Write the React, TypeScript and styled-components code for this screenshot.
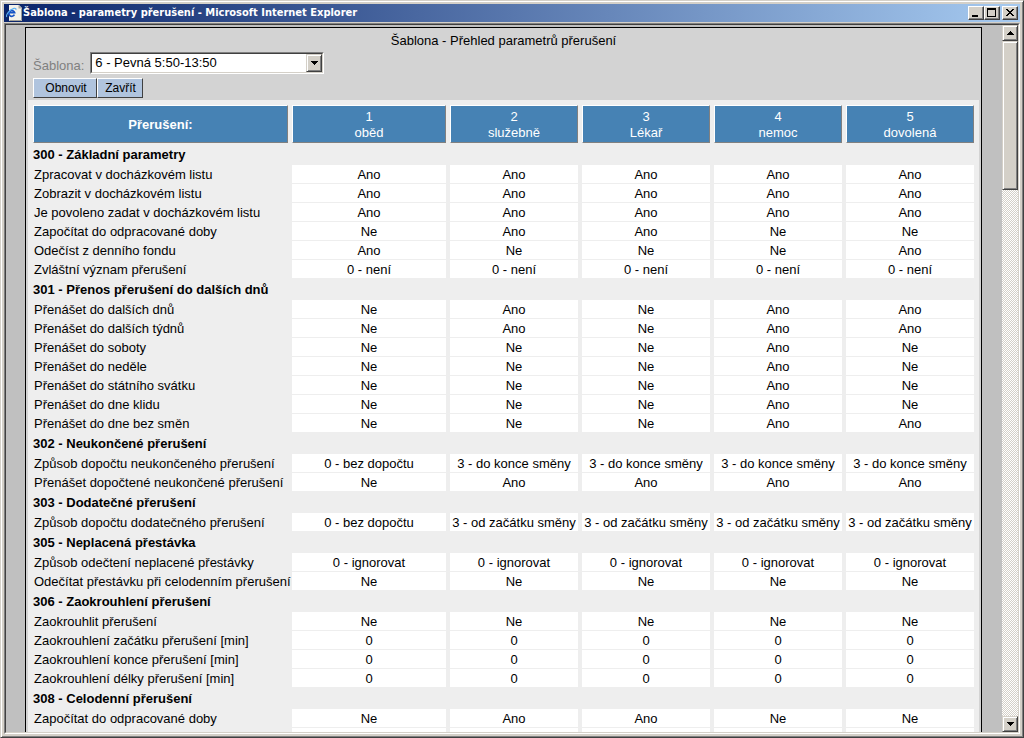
import React from "react";
import styled, { createGlobalStyle, css } from "styled-components";

const GlobalStyle = createGlobalStyle`
  *, *::before, *::after { box-sizing: border-box; }
  body { margin: 0; background: #d4d0c8; }
  button, select { font: inherit; color: inherit; margin: 0; border-radius: 0; }
`;

const face = "#d4d0c8";

/* Classic two-pixel raised edge of the system controls */
const raised = css`
  background: ${face};
  border: 1px solid;
  border-color: ${face} #404040 #404040 ${face};
  box-shadow: inset 1px 1px 0 #ffffff, inset -1px -1px 0 #808080;
`;

const WindowFrame = styled.div`
  display: flex;
  flex-direction: column;
  height: 100vh;
  min-width: 760px;
  padding: 3px;
  font: 13px/18px "Liberation Sans", Arial, sans-serif;
  color: #000000;
  ${raised}
`;

const TitleBar = styled.header`
  display: flex;
  align-items: center;
  flex: none;
  height: 18px;
  margin-bottom: 1px;
  padding: 0 2px;
  background: linear-gradient(to right, #0a246a, #a6caf0);
`;

const TitleText = styled.h1`
  flex: 1;
  margin: 0 0 0 1px;
  font: bold 11px/16px "DejaVu Sans Condensed", "DejaVu Sans", Tahoma, sans-serif;
  color: #ffffff;
  white-space: nowrap;
`;

const CaptionButton = styled.button<{ $apart?: boolean }>`
  display: flex;
  width: 16px;
  height: 14px;
  margin-left: ${(p) => (p.$apart ? 2 : 0)}px;
  padding: 0;
  ${raised}
  border-color: #ffffff #404040 #404040 #ffffff;
  box-shadow: inset -1px -1px 0 #808080;
`;

const Client = styled.div`
  display: flex;
  flex: 1;
  min-height: 0;
  border: 1px solid;
  border-color: #808080 #ffffff #ffffff #808080;
`;

const ClientInner = styled.div`
  display: flex;
  flex: 1;
  min-width: 0;
  border: 1px solid;
  border-color: #404040 ${face} ${face} #404040;
  background: #c0c0c0;
`;

const Viewport = styled.main`
  flex: 1;
  min-width: 0;
  overflow: hidden;
  padding: 2px 20px 0 19px;
`;

const Panel = styled.div`
  border: 1px solid #000000;
  background: #d3d3d3;
  padding: 4px 2px 2px;
`;

const PageTitle = styled.h2`
  margin: 0;
  font-size: 13px;
  font-weight: normal;
  line-height: 18px;
  text-align: center;
`;

const Field = styled.div`
  display: flex;
  align-items: flex-end;
  gap: 6px;
  padding: 2px 5px 4px;
`;

const FieldLabel = styled.label`
  font-size: 13px;
  line-height: 16px;
  color: #808080;
`;

const SelectBox = styled.div`
  position: relative;
  width: 234px;
  border: 1px solid;
  border-color: #808080 #ffffff #ffffff #808080;
`;

const Select = styled.select`
  display: block;
  appearance: none;
  width: 100%;
  height: 20px;
  padding: 0 20px 0 3px;
  border: 1px solid;
  border-color: #404040 ${face} ${face} #404040;
  background: #ffffff;
  font-size: 13px;
  line-height: 18px;
`;

const SelectArrow = styled.span`
  position: absolute;
  top: 1px;
  right: 1px;
  bottom: 1px;
  display: flex;
  align-items: center;
  justify-content: center;
  width: 16px;
  pointer-events: none;
  ${raised}
`;

const Actions = styled.div`
  display: flex;
  padding: 0 5px 2px;
`;

const ActionButton = styled.button<{ $wide?: boolean }>`
  height: 20px;
  width: ${(p) => (p.$wide ? 64 : 46)}px;
  padding: 0 0 0 ${(p) => (p.$wide ? 2 : 1)}px;
  border: 1px solid;
  border-color: #ffffff #404040 #404040 #ffffff;
  background: #b0c4de;
  font-size: 12px;
  line-height: 18px;
`;

const Grid = styled.table`
  table-layout: fixed;
  width: 100%;
  padding: 4px 1px 1px;
  border-collapse: separate;
  border-spacing: 4px 1px;
  background: #eeeeee;
  line-height: 16px;
  white-space: nowrap;
`;

const NameCol = styled.col`
  width: 255px;
`;

const FirstCol = styled.col`
  width: 154px;
`;

const HeadCell = styled.th`
  height: 38px;
  padding: 2px 0 0;
  border: 1px solid;
  border-color: #ffffff #808080 #808080 #ffffff;
  background: #4682b4;
  color: #ffffff;
  font-weight: normal;
  &:first-child { font-weight: bold; }
`;

const SectionCell = styled.th`
  height: 20px;
  padding: 2px 0 0;
  text-align: left;
`;

const NameCell = styled.th`
  height: 18px;
  padding: 2px 0 0 1px;
  font-weight: normal;
  text-align: left;
`;

const ValueCell = styled.td`
  height: 18px;
  padding: 2px 0 0;
  background: #ffffff;
  text-align: center;
`;

const ScrollBar = styled.div`
  display: flex;
  flex: none;
  flex-direction: column;
  width: 16px;
  background: repeating-conic-gradient(#ffffff 0 25%, ${face} 0 50%) 0 0 / 2px 2px;
`;

const ScrollButton = styled.button`
  display: flex;
  align-items: center;
  justify-content: center;
  flex: none;
  width: 16px;
  height: 16px;
  padding: 0;
  ${raised}
`;

const ScrollTrack = styled.div`
  flex: 1;
`;

const ScrollThumb = styled.div`
  height: 22%;
  ${raised}
`;

const Arrow = ({ up = false }: { up?: boolean }) => (
  <svg width="7" height="4" viewBox="0 0 7 4" shapeRendering="crispEdges" aria-hidden="true">
    <path d={up ? "M3 0h1v1h1v1h1v1h1v1H0V3h1V2h1V1h1z" : "M0 0h7v1H6v1H5v1H4v1H3V3H2V2H1V1H0z"} />
  </svg>
);

const PageIcon = () => (
  <svg width="16" height="16" viewBox="0 0 16 16" aria-hidden="true">
    <path d="M3 0h10l3 3v13H3z" fill="#f4f2ea" />
    <path d="M12.500 0v3.500H16z" fill="#a8a79f" />
    <path d="M15.500 3.500v12H3.500" fill="none" stroke="#a09f97" />
    <path d="M8.400 9.700A2.900 2.900 0 1 1 8.600 7.600H3.400" fill="none" stroke="#1552c4" strokeWidth="1.700" />
    <path d="M.9 12C-.6 10 3.600 4.500 8 3.400c1.800-.4 2.400.4 1.700 1.600" fill="none" stroke="#5ab0f4" strokeWidth="1.100" />
  </svg>
);

type Row = [string, string[]];
type Section = { title: string; rows: Row[] };

const same = (v: string) => [v, v, v, v, v];
const flags = (s: string) => s.split("").map((c) => (c === "A" ? "Ano" : "Ne"));

const columns = ["oběd", "služebně", "Lékař", "nemoc", "dovolená"];

const sections: Section[] = [
  {
    title: "300 - Základní parametry",
    rows: [
      ["Zpracovat v docházkovém listu", flags("AAAAA")],
      ["Zobrazit v docházkovém listu", flags("AAAAA")],
      ["Je povoleno zadat v docházkovém listu", flags("AAAAA")],
      ["Započítat do odpracované doby", flags("NAANN")],
      ["Odečíst z denního fondu", flags("ANNNA")],
      ["Zvláštní význam přerušení", same("0 - není")],
    ],
  },
  {
    title: "301 - Přenos přerušení do dalších dnů",
    rows: [
      ["Přenášet do dalších dnů", flags("NANAA")],
      ["Přenášet do dalších týdnů", flags("NANAA")],
      ["Přenášet do soboty", flags("NNNAN")],
      ["Přenášet do neděle", flags("NNNAN")],
      ["Přenášet do státního svátku", flags("NNNAN")],
      ["Přenášet do dne klidu", flags("NNNAN")],
      ["Přenášet do dne bez směn", flags("NNNAA")],
    ],
  },
  {
    title: "302 - Neukončené přerušení",
    rows: [
      ["Způsob dopočtu neukončeného přerušení", ["0 - bez dopočtu", ...same("3 - do konce směny").slice(1)]],
      ["Přenášet dopočtené neukončené přerušení", flags("NAAAA")],
    ],
  },
  {
    title: "303 - Dodatečné přerušení",
    rows: [
      ["Způsob dopočtu dodatečného přerušení", ["0 - bez dopočtu", ...same("3 - od začátku směny").slice(1)]],
    ],
  },
  {
    title: "305 - Neplacená přestávka",
    rows: [
      ["Způsob odečtení neplacené přestávky", same("0 - ignorovat")],
      ["Odečítat přestávku při celodenním přerušení", flags("NNNNN")],
    ],
  },
  {
    title: "306 - Zaokrouhlení přerušení",
    rows: [
      ["Zaokrouhlit přerušení", flags("NNNNN")],
      ["Zaokrouhlení začátku přerušení [min]", same("0")],
      ["Zaokrouhlení konce přerušení [min]", same("0")],
      ["Zaokrouhlení délky přerušení [min]", same("0")],
    ],
  },
  {
    title: "308 - Celodenní přerušení",
    rows: [
      ["Započítat do odpracované doby", flags("NAANN")],
      ["", same("")],
    ],
  },
];

export default function App() {
  return (
    <>
      <GlobalStyle />
      <WindowFrame>
        <TitleBar>
          <PageIcon />
          <TitleText>Šablona - parametry přerušení - Microsoft Internet Explorer</TitleText>
          <CaptionButton type="button" aria-label="Minimalizovat">
            <svg width="14" height="12" viewBox="0 0 14 12" shapeRendering="crispEdges">
              <path d="M3 8h6v2H3z" />
            </svg>
          </CaptionButton>
          <CaptionButton type="button" aria-label="Maximalizovat">
            <svg width="14" height="12" viewBox="0 0 14 12" shapeRendering="crispEdges">
              <path d="M2 1h9v9H2zM3 3v6h7V3z" fillRule="evenodd" />
            </svg>
          </CaptionButton>
          <CaptionButton type="button" aria-label="Zavřít okno" $apart>
            <svg width="14" height="12" viewBox="0 0 14 12" shapeRendering="crispEdges">
              <path d="M3 2h2v1h1v1h2V3h1V2h2v1h-1v1H9v1H8v1h1v1h1v1h1v1H9V8H8V7H6v1H5v1H3V8h1V7h1V6h1V5H5V4H4V3H3z" />
            </svg>
          </CaptionButton>
        </TitleBar>
        <Client>
          <ClientInner>
            <Viewport>
              <Panel>
                <PageTitle>Šablona - Přehled parametrů přerušení</PageTitle>
                <Field>
                  <FieldLabel htmlFor="template">Šablona:</FieldLabel>
                  <SelectBox>
                    <Select id="template" defaultValue="6">
                      <option value="6">6 - Pevná 5:50-13:50</option>
                    </Select>
                    <SelectArrow>
                      <Arrow />
                    </SelectArrow>
                  </SelectBox>
                </Field>
                <Actions>
                  <ActionButton type="button" $wide>Obnovit</ActionButton>
                  <ActionButton type="button">Zavřít</ActionButton>
                </Actions>
                <Grid>
                  <colgroup>
                    <NameCol />
                    <FirstCol />
                    <col span={4} />
                  </colgroup>
                  <thead>
                    <tr>
                      <HeadCell scope="col">Přerušení:</HeadCell>
                      {columns.map((name, i) => (
                        <HeadCell scope="col" key={name}>
                          {i + 1}
                          <br />
                          {name}
                        </HeadCell>
                      ))}
                    </tr>
                  </thead>
                  {sections.map((section) => (
                    <tbody key={section.title}>
                      <tr>
                        <SectionCell colSpan={6} scope="rowgroup">{section.title}</SectionCell>
                      </tr>
                      {section.rows.map(([name, values]) => (
                        <tr key={name}>
                          <NameCell scope="row">{name}</NameCell>
                          {values.map((value, i) => (
                            <ValueCell key={i}>{value}</ValueCell>
                          ))}
                        </tr>
                      ))}
                    </tbody>
                  ))}
                </Grid>
              </Panel>
            </Viewport>
            <ScrollBar>
              <ScrollButton type="button" aria-label="Nahoru"><Arrow up /></ScrollButton>
              <ScrollTrack>
                <ScrollThumb />
              </ScrollTrack>
              <ScrollButton type="button" aria-label="Dolů"><Arrow /></ScrollButton>
            </ScrollBar>
          </ClientInner>
        </Client>
      </WindowFrame>
    </>
  );
}
